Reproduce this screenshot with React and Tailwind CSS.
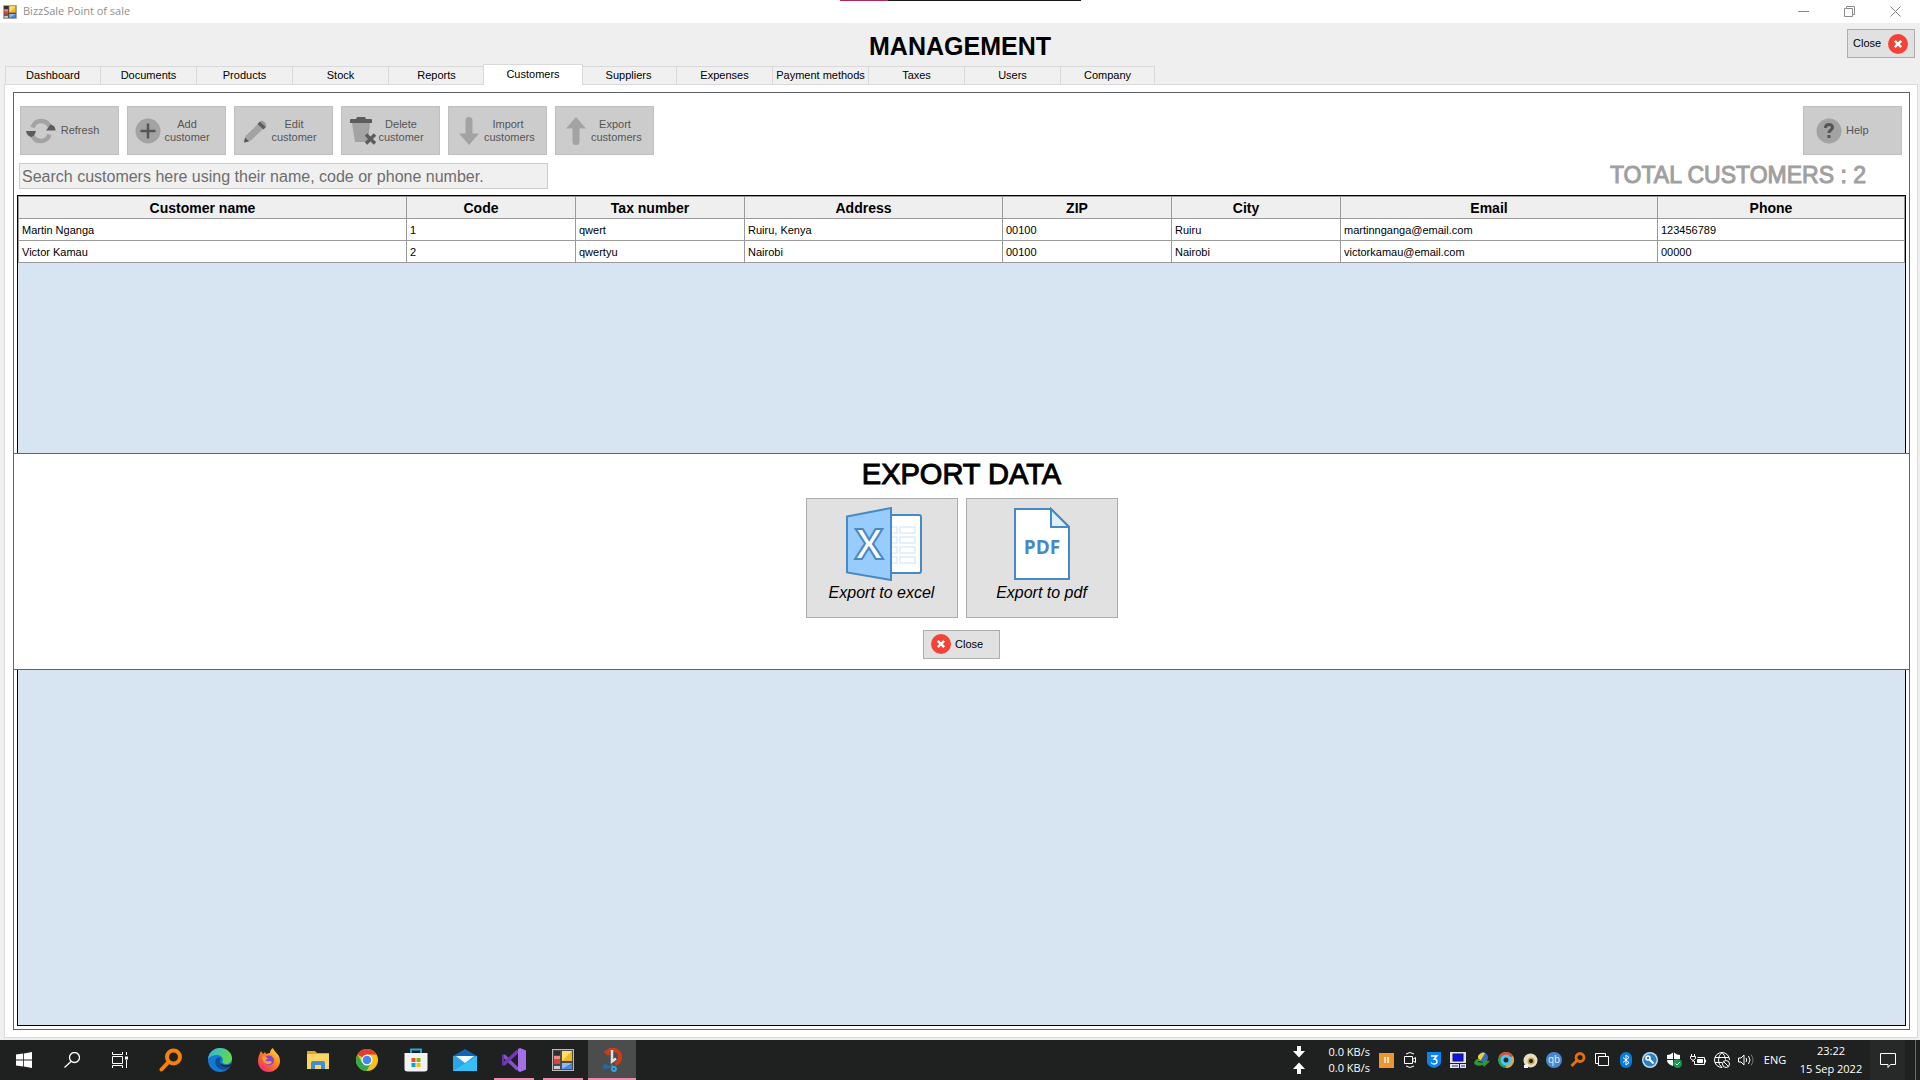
import React from "react";

const TABS = [
  "Dashboard",
  "Documents",
  "Products",
  "Stock",
  "Reports",
  "Customers",
  "Suppliers",
  "Expenses",
  "Payment methods",
  "Taxes",
  "Users",
  "Company",
];

const COLUMNS = [
  { key: "name", label: "Customer name", width: "w-[388px]" },
  { key: "code", label: "Code", width: "w-[169px]" },
  { key: "tax", label: "Tax number", width: "w-[169px]" },
  { key: "address", label: "Address", width: "w-[258px]" },
  { key: "zip", label: "ZIP", width: "w-[169px]" },
  { key: "city", label: "City", width: "w-[169px]" },
  { key: "email", label: "Email", width: "w-[317px]" },
  { key: "phone", label: "Phone", width: "" },
];

const CUSTOMERS = [
  {
    name: "Martin Nganga",
    code: "1",
    tax: "qwert",
    address: "Ruiru, Kenya",
    zip: "00100",
    city: "Ruiru",
    email: "martinnganga@email.com",
    phone: "123456789",
  },
  {
    name: "Victor Kamau",
    code: "2",
    tax: "qwertyu",
    address: "Nairobi",
    zip: "00100",
    city: "Nairobi",
    email: "victorkamau@email.com",
    phone: "00000",
  },
];

function AppIcon({ className }) {
  return (
    <svg className={className} viewBox="0 0 22 22" aria-hidden="true">
      <rect x="0.5" y="0.5" width="21" height="21" fill="#4a4a4a" stroke="#b9b9b9" />
      <rect x="2" y="2" width="6" height="4" fill="#2e2e2e" />
      <rect x="2" y="7" width="6" height="8" fill="#d8433c" />
      <rect x="2" y="7" width="6" height="3" fill="#f08a80" />
      <rect x="10" y="2" width="10" height="10" fill="#f0b71e" />
      <path d="M10 2h10L10 12z" fill="#ffdc6b" />
      <rect x="10" y="14" width="10" height="6" fill="#4a86e0" />
      <path d="M10 14h10l-10 6z" fill="#8db9f5" />
      <rect x="2" y="17" width="6" height="3" fill="#cfcfcf" />
    </svg>
  );
}

function TitleBar() {
  return (
    <div className="relative flex h-[23px] items-center bg-white pl-[3px] font-['Open_Sans',sans-serif]">
      <AppIcon className="size-[14px]" />
      <span className="ml-1.5 text-[11px] text-[#8f8f8f]">BizzSale Point of sale</span>
      <div className="absolute top-0 left-[840px] flex h-px w-[241px] bg-[#1a1a1a]">
        <div className="w-12 bg-[#b3285c]" />
      </div>
      <div className="mr-0.5 ml-auto flex">
        <button type="button" aria-label="Minimize" className="flex h-5 w-[46px] items-center justify-center">
          <svg className="size-[11px]" viewBox="0 0 11 11" stroke="#8a8a8a">
            <path d="M0 5.5h11" />
          </svg>
        </button>
        <button type="button" aria-label="Restore" className="flex h-5 w-[46px] items-center justify-center">
          <svg className="size-[11px]" viewBox="0 0 11 11" fill="none" stroke="#8a8a8a">
            <path d="M.5 2.5h8v8h-8zM2.500 2.500v-2h8v8h-2" />
          </svg>
        </button>
        <button type="button" aria-label="Close window" className="flex h-5 w-[46px] items-center justify-center">
          <svg className="size-[11px]" viewBox="0 0 11 11" stroke="#7d7d7d">
            <path d="M.5.5l10 10M10.500.5l-10 10" />
          </svg>
        </button>
      </div>
    </div>
  );
}

function CloseIcon() {
  return (
    <svg className="size-5" viewBox="0 0 20 20" aria-hidden="true">
      <circle cx="10" cy="10" r="10" fill="#f44336" />
      <path d="M6.800 6.800l6.400 6.400M13.200 6.800l-6.400 6.400" stroke="#fff" strokeWidth="2.400" />
    </svg>
  );
}

function RefreshIcon() {
  return (
    <svg className="h-[26px] w-[30px]" viewBox="0 0 30 26" fill="none">
      <path d="M6.500 9.500C8 5.500 11 3 15 3c4.500 0 7.500 2.500 9 6" stroke="#a3a3a3" strokeWidth="4.500" />
      <path d="M23.500 16.500C22 20.500 19 23 15 23c-4.500 0-7.500-2.500-9-6" stroke="#a3a3a3" strokeWidth="4.500" />
      <path d="M20 12.500L24.500 6.500q5 1 5 6z" fill="#5c5c5c" />
      <path d="M0 13h10q-1 5-5 6-4-1-5-6z" fill="#5c5c5c" />
    </svg>
  );
}

function AddIcon() {
  return (
    <svg className="h-[26px] w-[30px]" viewBox="0 0 30 26">
      <circle cx="15" cy="13" r="12.500" fill="#a3a3a3" />
      <path d="M15 5.500v15M7.500 13h15" stroke="#555" strokeWidth="2.500" />
    </svg>
  );
}

function EditIcon() {
  return (
    <svg className="h-[26px] w-[30px]" viewBox="0 0 30 26">
      <path d="M4 24.500l2-7L19 5l5 5L11 22.500z" fill="#a3a3a3" />
      <path d="M4 24.500l1-5 4 4z" fill="#555" />
      <path d="M17.500 6l2.500-2.500 6 5.500-2.500 2.500z" fill="#5c5c5c" />
      <path d="M20 3.500c2-2.500 7.500 1.500 6 5.500z" fill="#999" />
    </svg>
  );
}

function DeleteIcon() {
  return (
    <svg className="h-7 w-[30px]" viewBox="0 0 30 28">
      <path d="M5 6h18l-2 19H8z" fill="#a3a3a3" />
      <path d="M3 3q0-1 1-1h5l1-2h8l1 2h5q1 0 1 1v3H3z" fill="#5c5c5c" />
      <path d="M19 17.500l9 9M28 17.500l-9 9" stroke="#5c5c5c" strokeWidth="3.500" />
    </svg>
  );
}

function ArrowIcon({ up }) {
  return (
    <svg className="h-7 w-[30px]" viewBox="0 0 30 28">
      <path
        d={
          up
            ? "M15 0L25 11.500H18.500V24.500a3.500 3.500 0 0 1-7 0V11.500H5z"
            : "M15 28L25 16.500H18.500V3.500a3.500 3.500 0 0 0-7 0V16.500H5z"
        }
        fill="#a3a3a3"
      />
    </svg>
  );
}

function HelpIcon() {
  return (
    <svg className="size-[26px]" viewBox="0 0 26 26">
      <circle cx="13" cy="13" r="12.500" fill="#a3a3a3" />
      <path d="M9.500 10c0-4.500 7-4.500 7-.5 0 2.500-3.500 2.500-3.500 5.500" fill="none" stroke="#555" strokeWidth="3" />
      <rect x="11.500" y="17" width="3" height="3" fill="#555" />
    </svg>
  );
}

const TOOLS = [
  { label: "Refresh", icon: <RefreshIcon /> },
  { label: "Add customer", icon: <AddIcon /> },
  { label: "Edit customer", icon: <EditIcon /> },
  { label: "Delete customer", icon: <DeleteIcon /> },
  { label: "Import customers", icon: <ArrowIcon /> },
  { label: "Export customers", icon: <ArrowIcon up /> },
];

function ToolButton({ icon, label }) {
  return (
    <button
      type="button"
      disabled
      className="flex h-[49px] w-[99px] items-center border border-[#bfbfbf] bg-[#cccccc] pl-[5px] text-[11px] leading-[13px] text-[#555]"
    >
      {icon}
      <span className="w-12 text-center">{label}</span>
    </button>
  );
}

function CustomerTable() {
  return (
    <table className="w-full table-fixed border-collapse bg-white text-[11px]">
      <thead>
        <tr className="h-[22px] bg-[#efefef] text-sm leading-4">
          {COLUMNS.map((col) => (
            <th key={col.key} className={`${col.width} border border-[#9a9a9a] py-0 pr-5 pl-0 font-bold`}>
              {col.label}
            </th>
          ))}
        </tr>
      </thead>
      <tbody>
        {CUSTOMERS.map((customer) => (
          <tr key={customer.code} className="h-[22px] leading-4">
            {COLUMNS.map((col) => (
              <td key={col.key} className="border border-[#9a9a9a] px-[3px] py-0">
                {customer[col.key]}
              </td>
            ))}
          </tr>
        ))}
      </tbody>
    </table>
  );
}

function ExcelIcon() {
  return (
    <svg className="ml-1 h-[74px] w-[76px]" viewBox="0 0 76 74" aria-hidden="true">
      <rect x="40" y="8" width="35" height="58" rx="2" fill="#fff" stroke="#4788c7" strokeWidth="2" />
      <g fill="#fff" stroke="#dcebfa" strokeWidth="1.500">
        <path d="M40 20h11v6H40zM54 20h15v6H54zM40 30h11v6H40zM54 30h15v6H54zM40 40h11v6H40zM54 40h15v6H54zM40 50h11v6H40zM54 50h15v6H54z" />
      </g>
      <path d="M1 9.500L45 1v72L1 65.500z" fill="#98ccfd" stroke="#4788c7" strokeWidth="2" />
      <text
        x="23"
        y="52"
        textAnchor="middle"
        className="font-['Open_Sans',sans-serif] text-[42px] font-bold not-italic"
        fill="#fff"
        stroke="#4788c7"
        strokeWidth="2"
      >
        X
      </text>
    </svg>
  );
}

function PdfIcon() {
  return (
    <svg className="h-[74px] w-14" viewBox="0 0 56 74" aria-hidden="true">
      <path d="M1 2h36l18 18v52H1z" fill="#fff" stroke="#4788c7" strokeWidth="2" />
      <path d="M37 2v18h18z" fill="#dff0fe" stroke="#4788c7" strokeWidth="2" />
      <text
        x="28"
        y="47"
        textAnchor="middle"
        className="font-['Open_Sans',sans-serif] text-[19px] font-bold not-italic"
        fill="#4788c7"
      >
        PDF
      </text>
    </svg>
  );
}

function ExportButton({ icon, label }) {
  return (
    <button
      type="button"
      className="flex h-[120px] w-[152px] flex-col items-center border border-[#adadad] bg-[#e1e1e1] pt-2 text-base italic"
    >
      {icon}
      {label}
    </button>
  );
}

function ExportDialog() {
  return (
    <div
      role="dialog"
      aria-labelledby="export-title"
      className="absolute inset-x-[-1px] inset-y-0 my-auto flex h-fit flex-col items-center border border-[#5f646b] bg-white pb-2.5"
    >
      <h2 id="export-title" className="mb-1 text-[29px] leading-10 [-webkit-text-stroke:1px_black]">
        EXPORT DATA
      </h2>
      <div className="flex gap-2">
        <ExportButton icon={<ExcelIcon />} label="Export to excel" />
        <ExportButton icon={<PdfIcon />} label="Export to pdf" />
      </div>
      <button
        type="button"
        className="mt-3 flex h-[29px] w-[77px] items-center gap-1 border border-[#adadad] bg-[#e1e1e1] pl-[7px] text-[11px]"
      >
        <CloseIcon />
        Close
      </button>
    </div>
  );
}

const PINNED = [
  {
    name: "Everything",
    icon: (
      <svg className="size-6" viewBox="0 0 24 24" fill="none" stroke="#f5820c" strokeWidth="4">
        <circle cx="14.500" cy="9" r="6.500" />
        <path d="M9.500 14L2.500 21.500" strokeLinecap="round" />
      </svg>
    ),
  },
  {
    name: "Edge",
    icon: (
      <svg className="size-6" viewBox="0 0 24 24">
        <defs>
          <linearGradient id="edge-top" x1="0" y1="0" x2="1" y2="0.400">
            <stop offset="0" stopColor="#2fb4ea" />
            <stop offset="1" stopColor="#62d84e" />
          </linearGradient>
        </defs>
        <circle cx="12" cy="12" r="12" fill="#1479cf" />
        <path d="M0 11C1 4 6 0 12 0c7 0 12 5 12 10 0 4-3 6-6 6-2.500 0-4-1-3.500-2.500C16 10 13 7 9 7c-4 0-7 1.500-9 4z" fill="url(#edge-top)" />
        <path d="M9 10c-3 3-2 9 3 11 4 1.500 8 .5 10.500-3C18 20 12 18.500 12 14c0-2 .500-3 1-3.500-1-1-3-1.500-4-.5z" fill="#0c4f9e" />
        <path d="M22.500 18c-4 2-9.500 1-10.500-3.500 2 3 8 4 11 1z" fill="#1f2220" />
      </svg>
    ),
  },
  {
    name: "Firefox",
    icon: (
      <svg className="size-6" viewBox="0 0 24 24">
        <defs>
          <linearGradient id="fox" x1="1" y1="0" x2="0.200" y2="1">
            <stop offset="0" stopColor="#fff04a" />
            <stop offset="0.450" stopColor="#ff8a1e" />
            <stop offset="1" stopColor="#f5246c" />
          </linearGradient>
        </defs>
        <path d="M3 5l1-2 2 3 2-2 1 2c2-1 3-1 4-1 0-2 1-4 3-5 1 4 7 6 7 13 0 6-5 11-11.500 11S1 19 1 13c0-3 1-6 2-8z" fill="url(#fox)" />
        <circle cx="12" cy="12.500" r="5" fill="#8344d8" />
        <path d="M5 9c3-1 5 0 6 2-2 0-3 1-2 2 2 1 4-1 6 1-2 4-9 3-10-5z" fill="#ff9a2a" />
      </svg>
    ),
  },
  {
    name: "File Explorer",
    icon: (
      <svg className="size-6" viewBox="0 0 24 24">
        <path d="M1 3h8l2 2h12v4H1z" fill="#e3a322" />
        <path d="M1 6h22v15H1z" fill="#fcd462" />
        <path d="M5 21v-6q0-2 2-2h10q2 0 2 2v6h-4v-4H9v4z" fill="#3d8fd6" />
      </svg>
    ),
  },
  {
    name: "Chrome",
    icon: (
      <svg className="size-6" viewBox="0 0 24 24">
        <circle cx="12" cy="12" r="11" fill="#fbc116" />
        <path d="M12 12L2.500 6.500A11 11 0 0 1 21.500 6.500H12z" fill="#e33b2e" />
        <path d="M2.500 6.500A11 11 0 0 0 11.500 23l5-8.500L12 12 7 14.500z" fill="#2da94f" />
        <circle cx="12" cy="12" r="5.500" fill="#fff" />
        <circle cx="12" cy="12" r="4.300" fill="#4285f4" />
      </svg>
    ),
  },
  {
    name: "Microsoft Store",
    icon: (
      <svg className="size-6" viewBox="0 0 24 24">
        <path d="M7 6V1.500h10V6" fill="none" stroke="#28a8e0" strokeWidth="1.800" />
        <path d="M.5 5h23v16q0 2.500-3 2.500h-17q-3 0-3-2.500z" fill="#f3f3f3" />
        <path d="M7.500 10H11.500v4h-4z" fill="#f04e23" />
        <path d="M12.500 10h4v4h-4z" fill="#7fba00" />
        <path d="M7.500 15h4v4h-4z" fill="#00a1f1" />
        <path d="M12.500 15h4v4h-4z" fill="#ffb900" />
      </svg>
    ),
  },
  {
    name: "Mail",
    icon: (
      <svg className="size-6" viewBox="0 0 24 24">
        <path d="M0 8L12 1l12 7v3H0z" fill="#1066b5" />
        <path d="M0 8h24v15H0z" fill="#2aa5ea" />
        <path d="M24 8v15H0z" fill="#37c0f5" />
        <path d="M3 8h18l-9 7z" fill="#f4f9fd" />
      </svg>
    ),
  },
  {
    name: "Visual Studio",
    running: "w-10",
    icon: (
      <svg className="size-6" viewBox="0 0 24 24">
        <path d="M1.500 7.500L16 21.500" stroke="#8a54c9" strokeWidth="3.500" />
        <path d="M1.500 16.500L16 3" stroke="#7339b5" strokeWidth="3.500" />
        <path d="M1 6.500v11" stroke="#6a34a8" strokeWidth="2" />
        <path d="M16 1l2-1 6 2.500v19L18 24l-2-1z" fill="#a76fe6" />
      </svg>
    ),
  },
  { name: "BizzSale", running: "w-10", icon: <AppIcon className="size-[22px]" /> },
  {
    name: "Snipping Tool",
    running: "w-12",
    active: true,
    icon: (
      <svg className="size-6" viewBox="0 0 24 24" fill="none">
        <path d="M7 4.500C11-.5 20 1.500 20 9c0 4-2 6-5 7" stroke="#cf3a17" strokeWidth="4" />
        <path d="M5 3l4 4" stroke="#cf3a17" strokeWidth="3" />
        <path d="M3 16.500q5-1 8 3.500l-7 1z" fill="#2767ad" />
        <path d="M11 17l2 2" stroke="#2f7fd0" strokeWidth="2.500" />
        <path d="M12 2v11.500l4-3" stroke="#dfe3e6" strokeWidth="2.500" />
        <circle cx="14" cy="21" r="2" stroke="#39a6e8" strokeWidth="1.800" />
      </svg>
    ),
  },
];

const TRAY = [
  {
    name: "Pause",
    icon: (
      <svg className="size-[15px]" viewBox="0 0 15 15">
        <path d="M0 0h15v15H0z" fill="#f0962e" />
        <path d="M6 4v6M9 4v6" stroke="#fff" strokeWidth="1.500" />
      </svg>
    ),
  },
  {
    name: "Meet now",
    icon: (
      <svg className="size-4" viewBox="0 0 16 16" fill="none" stroke="#fff">
        <path d="M2.500 4.500h8v7h-8zM10.500 7.500l3-2v5l-3-2M4 2q4-3 8 0M4 14q4 3 8 0" />
      </svg>
    ),
  },
  {
    name: "Shield",
    icon: (
      <svg className="size-4" viewBox="0 0 16 16">
        <path d="M1 0h14v10q0 4-7 6-7-2-7-6z" fill="#0d83ee" />
        <path d="M5 4h6L8 7q3 0 3 2.500T8 12q-2 0-3-1.500" fill="none" stroke="#fff" strokeWidth="1.300" />
      </svg>
    ),
  },
  {
    name: "Remote desktop",
    icon: (
      <svg className="size-4" viewBox="0 0 16 16">
        <path d="M0 0h16v11H0zM0 12h9v4H0zM10 12h6v4h-6z" fill="#e2e2ee" />
        <rect x="3" y="2" width="10" height="7" fill="#1010e8" stroke="#15155a" />
        <path d="M2 14h6M11 14h4" stroke="#33337a" />
      </svg>
    ),
  },
  {
    name: "Download manager",
    icon: (
      <svg className="size-4" viewBox="0 0 16 16">
        <circle cx="9" cy="5.500" r="5" fill="#3a66c4" />
        <path d="M4 4q4-5 7-3L7 8 4 9z" fill="#e8d23b" />
        <path d="M0 11q2-5 6-4l-2 3 5 1V8l7 1-6 6-1-2q-7 2-9-2z" fill="#2d9b31" />
      </svg>
    ),
  },
  {
    name: "Browser",
    icon: (
      <svg className="size-4" viewBox="0 0 16 16">
        <circle cx="8" cy="8" r="8" fill="#2e9d58" />
        <path d="M8 8L1 4a8 8 0 0 1 14 0z" fill="#df4d3d" />
        <path d="M8 16a8 8 0 0 0 7-12L8 8z" fill="#e8a33c" />
        <circle cx="8" cy="8" r="5.500" fill="#4cc5ee" />
        <circle cx="8" cy="8" r="2.500" fill="#1b3038" />
      </svg>
    ),
  },
  {
    name: "Disc",
    icon: (
      <svg className="size-[15px]" viewBox="0 0 15 15">
        <circle cx="7.500" cy="7.500" r="7" fill="#e6dfc6" />
        <circle cx="8" cy="8" r="3.500" fill="#cfa637" />
        <circle cx="8" cy="8" r="2" fill="#222" />
        <path d="M1 12l4-1v4H1z" fill="#f5f5f5" />
      </svg>
    ),
  },
  {
    name: "qBittorrent",
    icon: (
      <svg className="size-4" viewBox="0 0 16 16">
        <circle cx="8" cy="8" r="8" fill="#4a86cf" />
        <text x="8" y="11" textAnchor="middle" fill="#e2eefb" className="font-['Open_Sans',sans-serif] text-[10px]">
          qb
        </text>
      </svg>
    ),
  },
  {
    name: "Search tool",
    icon: (
      <svg className="size-4" viewBox="0 0 16 16" fill="none" stroke="#e8700a" strokeWidth="2.800">
        <circle cx="10" cy="5.500" r="4" />
        <path d="M7 8.500L1.500 14" />
      </svg>
    ),
  },
  {
    name: "Windows",
    icon: (
      <svg className="size-4" viewBox="0 0 16 16" fill="none" stroke="#fff">
        <path d="M4.500 4.500h10v9h-10zM4 11.500H1.500v-10h10V4" />
      </svg>
    ),
  },
  {
    name: "Bluetooth",
    icon: (
      <svg className="size-4" viewBox="0 0 16 16">
        <rect x="2" width="12" height="16" rx="6" fill="#0a7be0" />
        <path d="M5 5.500l6 5-3 2.500V3l3 2.500-6 5" fill="none" stroke="#fff" />
      </svg>
    ),
  },
  {
    name: "Key",
    icon: (
      <svg className="size-4" viewBox="0 0 16 16">
        <circle cx="8" cy="8" r="8" fill="#b9dcf5" />
        <circle cx="8" cy="8" r="6.500" fill="#2f7fc0" />
        <circle cx="6" cy="6" r="2" fill="none" stroke="#fff" strokeWidth="1.500" />
        <path d="M7.500 7.500l4 4" stroke="#fff" strokeWidth="2" />
      </svg>
    ),
  },
  {
    name: "Security",
    icon: (
      <svg className="size-4" viewBox="0 0 16 16">
        <path d="M7 .5Q4 3 1 3v4h6zM8 .5Q11 3 14 3v4H8zM1 8h6v6Q1 12 1 8zM8 8h6q0 4-6 6z" fill="#fff" />
        <circle cx="11.500" cy="11.500" r="4.500" fill="#159a4c" />
        <path d="M9.500 11.500l1.500 1.500 3-3" fill="none" stroke="#fff" />
      </svg>
    ),
  },
  {
    name: "Battery",
    icon: (
      <svg className="size-4" viewBox="0 0 16 16" fill="none" stroke="#fff">
        <path d="M4.500 9v3.500h10v-7h-7M15.500 7.500v3M1.500 2v2M4.500 2v2M.5 4.500h5v2l-2.500 2-2.500-2zM3 8v2" />
        <path d="M7.500 7.500h5v3h-5z" fill="#fff" />
      </svg>
    ),
  },
  {
    name: "Network",
    icon: (
      <svg className="size-4" viewBox="0 0 16 16" fill="none" stroke="#fff">
        <path d="M8 15.500A7.500 7.500 0 1 1 15.500 8M8 15.500Q4.500 13 4.500 8T8 .5Q11 3 11.500 7.500M1 5.500h14M1 10.500h7" />
        <circle cx="12" cy="12" r="3.500" />
        <path d="M9.500 9.500l5 5" />
      </svg>
    ),
  },
  {
    name: "Volume",
    icon: (
      <svg className="size-4" viewBox="0 0 16 16" fill="none" stroke="#fff">
        <path d="M.5 6v4h2.500l3 3V3L3 6zM8 6q1.500 2 0 4M10.500 4q3 4 0 8" />
        <path d="M13 2.500q4 5.500 0 11" stroke="#777" />
      </svg>
    ),
  },
];

function Taskbar() {
  return (
    <footer className="flex h-10 shrink-0 bg-[#1f2120] font-['Open_Sans',sans-serif] text-[11px] text-white">
      <button type="button" aria-label="Start" className="flex w-12 items-center justify-center">
        <svg className="size-4" viewBox="0 0 16 16" fill="#fff">
          <path d="M0 2.500l7-1v6H0zM7.800 1.400L16 0v7.500H7.800zM0 8.500h7v6l-7-1zM7.800 8.500H16V16l-8.200-1.400z" />
        </svg>
      </button>
      <button type="button" aria-label="Search" className="flex w-12 items-center justify-center">
        <svg className="size-4" viewBox="0 0 16 16" fill="none" stroke="#fff" strokeWidth="1.300">
          <circle cx="10.500" cy="5.500" r="5" />
          <path d="M7 9.500L.5 15.500" />
        </svg>
      </button>
      <button type="button" aria-label="Task view" className="mr-[3px] flex w-12 items-center justify-center">
        <svg className="size-4" viewBox="0 0 16 16" fill="none" stroke="#fff">
          <path d="M.5 4.500h10v7H.5zM.5 0v2.500h10V0M.5 16v-2.500h10V16M14.500 0v3M14.500 8v8" />
          <path d="M13 4.500h3v3h-3z" fill="#fff" stroke="none" />
        </svg>
      </button>
      <div className="flex gap-px">
        {PINNED.map((app) => (
          <button
            key={app.name}
            type="button"
            aria-label={app.name}
            className={`relative flex w-12 items-center justify-center ${app.active ? "bg-[#4b4d4c]" : ""}`}
          >
            {app.icon}
            {app.running && (
              <span className={`absolute bottom-0 left-1/2 h-0.5 -translate-x-1/2 bg-[#f08bb0] ${app.running}`} />
            )}
          </button>
        ))}
      </div>

      <div className="ml-auto flex items-center">
        <div className="mr-6 flex flex-col gap-1">
          <svg className="size-3" viewBox="0 0 12 12" fill="#fff">
            <path d="M4 0h4v5h4l-6 6.500L0 5h4z" />
          </svg>
          <svg className="size-3" viewBox="0 0 12 12" fill="#fff">
            <path d="M4 12h4V7h4L6 .5 0 7h4z" />
          </svg>
        </div>
        <div className="mr-1 leading-4">
          <div>0.0 KB/s</div>
          <div>0.0 KB/s</div>
        </div>
        {TRAY.map((item) => (
          <button key={item.name} type="button" aria-label={item.name} className="flex h-10 w-6 items-center justify-center">
            {item.icon}
          </button>
        ))}
        <span className="w-[34px] text-center">ENG</span>
        <div className="w-[78px] text-center leading-[18px]">
          <div>23:22</div>
          <div>15 Sep 2022</div>
        </div>
        <button
          type="button"
          aria-label="Notifications"
          className="mr-2.5 flex h-10 w-[35px] items-center justify-center bg-[#272928]"
        >
          <svg className="size-4" viewBox="0 0 16 16" fill="none" stroke="#fff">
            <path d="M.5 1.500h15v11h-5l-2.500 3v-3H.5z" />
          </svg>
        </button>
        <div className="h-10 w-[5px] border-l border-[#6b6b6b]" />
      </div>
    </footer>
  );
}

export default function App() {
  return (
    <div className="flex min-h-screen flex-col bg-[#efefef] font-['Liberation_Sans',Arial,sans-serif] text-black">
      <TitleBar />

      <header className="grid h-[41px] grid-cols-[1fr_auto_1fr] items-center">
        <h1 className="col-start-2 pt-1 text-[25px] leading-8 font-bold">MANAGEMENT</h1>
        <button
          type="button"
          className="mr-[5px] flex h-[29px] w-[68px] items-center justify-between justify-self-end border border-[#adadad] bg-[#e1e1e1] pr-1.5 pl-[5px] text-[11px]"
        >
          Close
          <CloseIcon />
        </button>
      </header>

      <div role="tablist" className="flex h-5 items-end pl-[5px] text-[11px]">
        {TABS.map((tab) =>
          tab === "Customers" ? (
            <button
              key={tab}
              type="button"
              role="tab"
              aria-selected="true"
              className="relative z-10 -mx-0.5 -mb-px h-[21px] w-[100px] border border-b-0 border-[#d9d9d9] bg-white pb-0.5"
            >
              {tab}
            </button>
          ) : (
            <button
              key={tab}
              type="button"
              role="tab"
              aria-selected="false"
              className="h-[18px] w-24 border-t border-r border-[#d9d9d9] bg-[#f0f0f0] leading-[17px] whitespace-nowrap first:border-l last:w-[94px]"
            >
              {tab}
            </button>
          ),
        )}
      </div>

      <main className="mr-0.5 mb-0.5 ml-1 flex flex-1 flex-col border border-[#d9d9d9] bg-white pt-[7px] pr-[7px] pb-[7px] pl-2">
        <section className="relative flex flex-1 flex-col border border-[#5f646b] px-[3px] pt-[13px] pb-[3px]">
          <div className="mb-2 flex justify-between pr-1 pl-[3px]">
            <div className="flex gap-2">
              {TOOLS.map((tool) => (
                <ToolButton key={tool.label} icon={tool.icon} label={tool.label} />
              ))}
            </div>
            <button
              type="button"
              disabled
              className="flex h-[49px] w-[99px] items-center gap-1 border border-[#bfbfbf] bg-[#cccccc] pl-3 text-[11px] text-[#555]"
            >
              <HelpIcon />
              Help
            </button>
          </div>

          <div className="mb-1.5 flex items-start justify-between pr-10 pl-0.5">
            <input
              type="text"
              aria-label="Search customers"
              disabled
              placeholder="Search customers here using their name, code or phone number."
              className="h-[26px] w-[529px] border border-[#cccccc] bg-[#f0f0f0] px-0.5 pt-0.5 text-base placeholder:text-[#6d6d6d]"
            />
            <p className="text-[23px] leading-6 text-[#a0a0a0] [-webkit-text-stroke:1px_#a0a0a0]">
              TOTAL CUSTOMERS : 2
            </p>
          </div>

          <div className="flex-1 border border-black bg-[#d7e4f1]">
            <CustomerTable />
          </div>

          <ExportDialog />
        </section>
      </main>

      <Taskbar />
    </div>
  );
}
